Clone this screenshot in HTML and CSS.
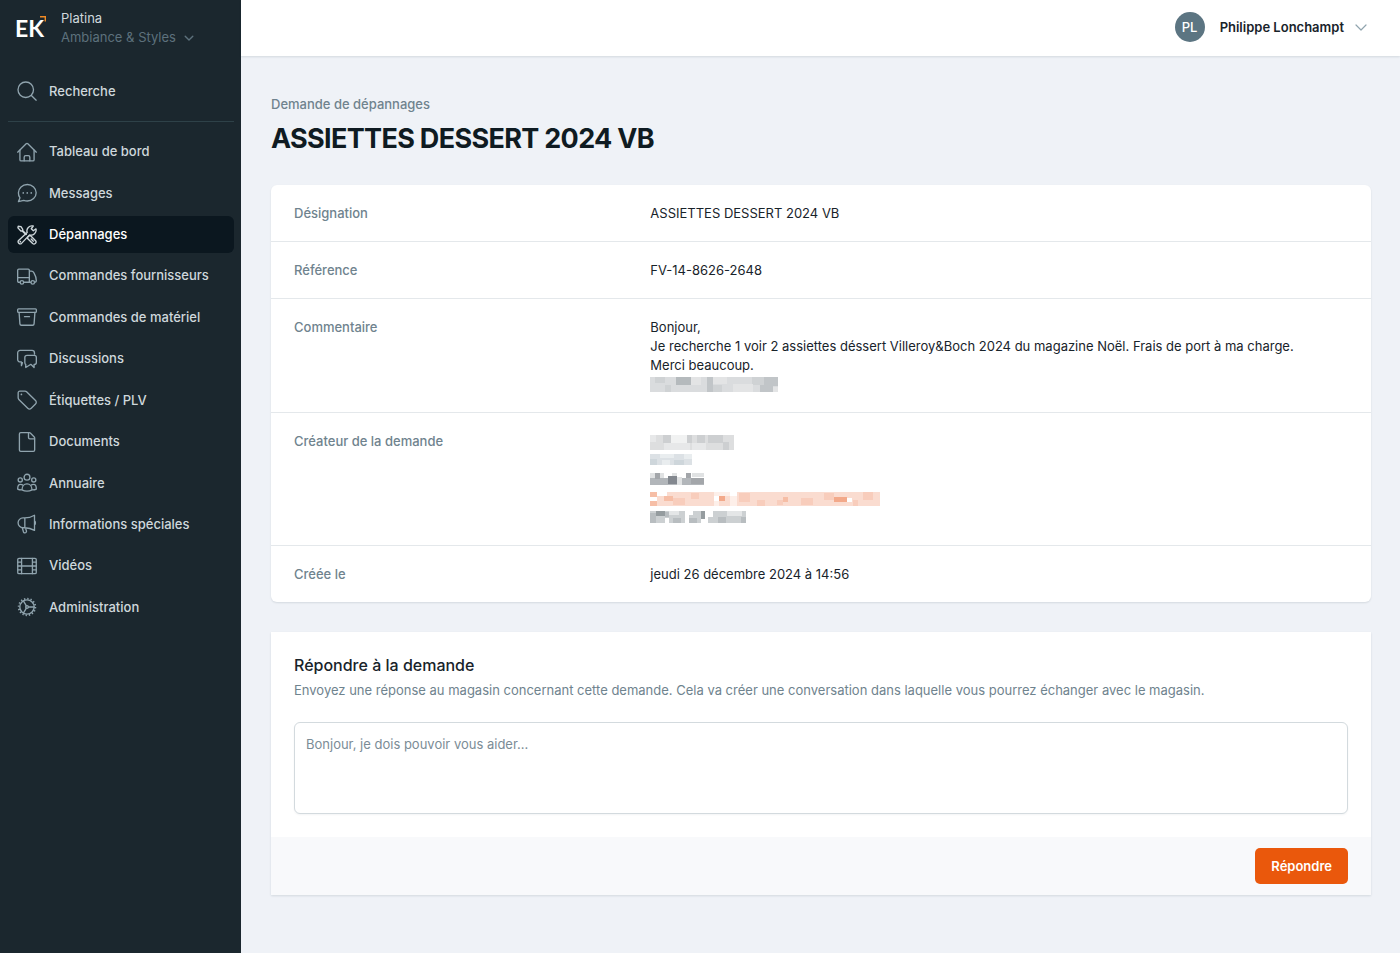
FILE: index.html
```html
<!DOCTYPE html>
<html lang="fr">
<head>
    <meta charset="UTF-8">
    <meta name="viewport" content="width=device-width, initial-scale=1.0">
    <title>ASSIETTES DESSERT 2024 VB</title>
    <link rel="stylesheet" href="styles.css">
</head>
<body>
    <aside class="sidebar">
        <button type="button" class="store-switch">
            <span class="logo">EK
                <svg class="logo-arrow" viewBox="0 0 6 6"><path d="M0 .7h5.3V5.5"/></svg>
            </span>
            <span class="store">
                <span class="store-name">Platina</span>
                <span class="store-brand">Ambiance &amp; Styles
                    <svg class="chevron" viewBox="0 0 10 10"><path d="M1.2 3.2 5 7l3.800-3.800"/></svg>
                </span>
            </span>
        </button>

        <a href="#" class="nav-link search-link">
            <svg class="icon" viewBox="0 0 24 24"><circle cx="10.500" cy="10.500" r="9.300"/><path d="m17.300 17.300 5.700 5.700"/></svg>
            Recherche
        </a>

        <nav class="nav">
            <a href="#" class="nav-link">
                <svg class="icon" viewBox="0 0 24 24"><path d="M.8 12.200 11 2.100a1.400 1.400 0 0 1 2 0l10.200 10.100"/><path d="M3.500 9.700v11.500c0 .8.600 1.400 1.400 1.400h14.200c.8 0 1.400-.6 1.400-1.400V9.700"/><path d="M8.600 22.500v-4.200c0-1.100.8-1.900 1.900-1.900h3c1.100 0 1.900.8 1.900 1.900v4.200"/></svg>
                Tableau de bord
            </a>
            <a href="#" class="nav-link">
                <svg class="icon" viewBox="0 0 24 24"><path d="M12.400 1.800c5.900 0 10.600 4.400 10.600 9.900s-4.700 9.900-10.600 9.900c-1.500 0-3-.3-4.300-.8L1.700 22.400l1.900-4.600a9.600 9.600 0 0 1-1.900-6.100c0-5.500 4.800-9.900 10.700-9.900Z"/><path class="dots" d="M7.500 11.900h.01M12.300 11.900h.01M17.100 11.900h.01"/></svg>
                Messages
            </a>
            <a href="#" class="nav-link active">
                <svg class="icon" viewBox="0 0 24 24"><path d="M1.500 1.500 4.800 2l2.100 3.300-.2 1.300 4.500 4.500M1.500 1.500l-.4 2 3.500 3.700 1.600-.1 4.400 4.400"/><path d="m14.500 13 1.600-.3 6.200 6.100a2.500 2.500 0 0 1-3.500 3.500l-6.100-6.200.3-1.600ZM17 16.800l2.600 2.600"/><path d="M22.800 4.600 19.600 7l-2.500-2.500L19.500 1.200a6.100 6.100 0 0 0-7.300 7.800L1.900 18.600a2.500 2.500 0 0 0 3.500 3.500L15.100 11.800a6.100 6.100 0 0 0 7.700-7.200Z"/><path class="dots" d="M4 20h.01"/></svg>
                Dépannages
            </a>
            <a href="#" class="nav-link">
                <svg class="icon" viewBox="0 0 24 24"><path d="M3.300 19.500H2.200c-.8 0-1.400-.6-1.400-1.400V5.200c0-.8.600-1.400 1.400-1.400h11.200c.8 0 1.400.6 1.400 1.400v14.300H8.600M.8 14h14M14.800 6.200h2.400c1.300 0 2.400.7 3 1.800 1.900 3.300 3 6.500 3 9.800 0 1-.7 1.700-1.700 1.700M16.300 19.500h-1.500"/><circle cx="5.900" cy="19.700" r="2.100"/><circle cx="18.900" cy="19.700" r="2.100"/></svg>
                Commandes fournisseurs
            </a>
            <a href="#" class="nav-link">
                <svg class="icon" viewBox="0 0 24 24"><rect x=".8" y="2.200" width="22.400" height="4.300" rx="1"/><path d="m2.500 6.500 1 13.800c.1 1 .8 1.600 1.700 1.600h13.600c.9 0 1.600-.6 1.700-1.600l1-13.800M9 11.600h6"/></svg>
                Commandes de matériel
            </a>
            <a href="#" class="nav-link">
                <svg class="icon" viewBox="0 0 24 24"><path d="M6.500 16.500 5.300 20v-4.500H3.800a3 3 0 0 1-3-3V4.700a3 3 0 0 1 3-3H18c1.700 0 3 1.300 3 3v1.500"/><path d="M12.200 7.700h8.500c1.400 0 2.500 1.100 2.500 2.500v5.900c0 1.400-1.100 2.500-2.500 2.500h-.2v3.600l-3.600-3.600h-.7l-5.700 3.600v-3.800c-.9-.3-1.100-1.100-1.100-2.300v-5.900c0-1.400 1.400-2.500 2.800-2.500Z"/></svg>
                Discussions
            </a>
            <a href="#" class="nav-link">
                <svg class="icon" viewBox="0 0 24 24"><path d="M3.300 1.400h6.300c.7 0 1.400.3 1.900.8l10.700 10.400a3 3 0 0 1 0 4.300l-5.100 5a3 3 0 0 1-4.200 0L2.200 11.300c-.5-.5-.8-1.200-.8-1.900V3.300c0-1 .9-1.900 1.900-1.900Z"/><path class="dots" d="M5.300 5.300h.01"/></svg>
                Étiquettes / PLV
            </a>
            <a href="#" class="nav-link">
                <svg class="icon" viewBox="0 0 24 24"><path d="M4.500.8h10.300c.5 0 .9.200 1.200.5l4.700 4.700c.3.300.5.800.5 1.200v14.400c0 .9-.7 1.600-1.600 1.600H4.500c-.9 0-1.600-.7-1.600-1.600V2.400C2.900 1.500 3.600.8 4.500.8Z"/><path d="M13.800 1v5.700c0 .9.700 1.600 1.600 1.600H21"/></svg>
                Documents
            </a>
            <a href="#" class="nav-link">
                <svg class="icon" viewBox="0 0 24 24"><circle cx="12" cy="5" r="3.500"/><circle cx="3.900" cy="8.300" r="2.500"/><circle cx="20.100" cy="8.300" r="2.500"/><path d="M6 20.200c0-4 2.500-7.200 6-7.200s6 3.200 6 7.200c-1.700 1-3.800 1.600-6 1.600s-4.300-.6-6-1.600ZM7.300 14.800c-.9-.8-2-1.200-3.200-1.200C2 13.600.8 15.800.8 19.300c1.400.7 3 1 5.200.9M16.700 14.800c.9-.8 2-1.200 3.200-1.200 2.100 0 3.300 2.200 3.300 5.700-1.400.7-3 1-5.200.9"/></svg>
                Annuaire
            </a>
            <a href="#" class="nav-link">
                <svg class="icon" viewBox="0 0 24 24"><path d="M9.400 16.500H7.200a5.900 5.900 0 0 1 0-11.800h2.200c4.100 0 8-1 11.600-3.200v18.200c-3.600-2.200-7.500-3.200-11.600-3.200Zm0 0V4.700M21 8.200c1.500 1 1.500 4 0 5M6.300 16.500l1.500 5.100c.3.900 1.300 1.300 2.200.9l.5-.2c.8-.4 1.100-1.300.8-2.100l-1.300-3.600"/></svg>
                Informations spéciales
            </a>
            <a href="#" class="nav-link">
                <svg class="icon" viewBox="0 0 24 24"><rect x=".9" y="2.800" width="22.200" height="18.400" rx="1.500"/><path d="M5.500 2.800v18.400M18.500 2.800v18.400M5.500 12h13M.9 7.400h4.600M.9 12h4.600M.9 16.600h4.600M18.500 7.400h4.600M18.500 12h4.600M18.500 16.600h4.600"/></svg>
                Vidéos
            </a>
            <a href="#" class="nav-link">
                <svg class="icon" viewBox="0 0 24 24"><circle cx="12" cy="12" r="8.600"/><circle class="teeth" cx="12" cy="12" r="10"/><circle cx="12" cy="12" r="1.600"/><path d="M13.600 12h7M11.200 10.600 7.700 4.600M11.200 13.400l-3.500 6"/></svg>
                Administration
            </a>
        </nav>
    </aside>

    <div class="page">
        <header class="topbar">
            <button type="button" class="user-menu">
                <span class="avatar">PL</span>
                <span class="user-name">Philippe Lonchampt</span>
                <svg class="user-chevron" viewBox="0 0 20 20"><path d="m5 8 5 5 5-5"/></svg>
            </button>
        </header>

        <main class="content">
            <p class="eyebrow">Demande de dépannages</p>
            <h1>ASSIETTES DESSERT 2024 VB</h1>

            <dl class="card details">
                <div class="row">
                    <dt>Désignation</dt>
                    <dd>ASSIETTES DESSERT 2024 VB</dd>
                </div>
                <div class="row">
                    <dt>Référence</dt>
                    <dd>FV-14-8626-2648</dd>
                </div>
                <div class="row">
                    <dt>Commentaire</dt>
                    <dd>
                        Bonjour,<br>
                        Je recherche 1 voir 2 assiettes déssert Villeroy&amp;Boch 2024 du magazine Noël. Frais de port à ma charge.<br>
                        Merci beaucoup.
                        <svg class="mosaic" width="128" height="19" shape-rendering="crispEdges">
                            <path fill="#dadcde" d="M0 2h128v15H0z"/>
                            <path fill="#cfd2d4" d="M5 2h10v6H5zM15 10h6v7h-6zM62 10h10v7H62zM102 2h12v8h-12z"/>
                            <path fill="#b5babd" d="M26 2h15v8H26z"/>
                            <path fill="#c1c5c8" d="M57 2h6v15h-6zM110 10h13v7h-13zM114 2h14v9h-14z"/>
                            <path fill="#e3e4e5" d="M63 2h14v7H63zM83 9h20v8H83zM41 2h10v8H41zM123 12h5v5h-5z"/>
                        </svg>
                    </dd>
                </div>
                <div class="row">
                    <dt>Créateur de la demande</dt>
                    <dd>
                        <svg class="mosaic" width="84" height="19" shape-rendering="crispEdges">
                            <path fill="#dddedf" d="M0 3h84v15H0z"/>
                            <path fill="#cdcfd1" d="M13 3h8v8h-8zM37 3h5v8h-5zM47 3h8v8h-8zM58 3h15v8H58zM73 10h6v8h-6z"/>
                            <path fill="#f1f2f2" d="M21 3h16v8H21z"/>
                            <path fill="#e7e8e9" d="M14 11h26v7H14zM42 11h14v7H42zM0 3h6v7H0z"/>
                        </svg>
                        <svg class="mosaic" width="42" height="19" shape-rendering="crispEdges">
                            <path fill="#dce1e5" d="M0 3h42v11H0z"/>
                            <path fill="#e9edef" d="M10 3h14v4H10zM12 9h8v5h-8zM34 3h8v5h-8z"/>
                            <path fill="#ced6db" d="M0 8h7v6H0zM24 9h10v5H24z"/>
                        </svg>
                        <svg class="mosaic" width="54" height="19" shape-rendering="crispEdges">
                            <path fill="#b2b6ba" d="M0 8h54v7H0z"/>
                            <path fill="#e0e2e3" d="M0 3h14v5H0zM22 3h5v3h-5zM42 3h12v4H42zM27 7h5v8h-5z"/>
                            <path fill="#a3a6aa" d="M5 3h5v6H5zM36 3h5v5h-5zM41 8h13v6H41z"/>
                            <path fill="#83888f" d="M18 6h9v8h-9z"/>
                        </svg>
                        <svg class="mosaic" width="230" height="19" shape-rendering="crispEdges">
                            <path fill="#fadcd0" d="M7 3h57v14H7zM69 7h11v10H69zM87 3h143v14H87zM0 3h7v14H0z"/>
                            <path fill="#fdefe9" d="M64 3h16v4H64zM64 12h5v5h-5zM80 7h7v10h-7z"/>
                            <path fill="#f6bea6" d="M0 3h7v5H0zM0 12h7v5H0zM14 7h9v5h-9zM133 8h5v5h-5z"/>
                            <path fill="#f8cdbc" d="M23 9h12v7H23zM41 4h8v6h-8zM89 4h11v9H89zM107 11h8v6h-8zM127 11h6v5h-6zM151 9h12v7h-12zM174 4h10v7h-10zM213 3h10v8h-10zM203 11h5v6h-5z"/>
                            <path fill="#f3a98a" d="M69 7h6v5h-6zM184 8h13v5h-13z"/>
                            <path fill="#fff" d="M7 3h10v4H7zM0 8h7v4H0zM197 9h5v4h-5z"/>
                        </svg>
                        <svg class="mosaic" width="96" height="19" shape-rendering="crispEdges">
                            <path fill="#ccd0d2" d="M0 3h35v12H0zM39 7h12v8H39zM43 3h12v8H43zM58 9h20v6H58zM63 3h33v7H63zM78 9h18v6H78z"/>
                            <path fill="#959c9f" d="M6 3h9v5H6zM51 3h4v8h-4z"/>
                            <path fill="#b8bdc0" d="M0 5h6v10H0zM15 4h4v5h-4zM23 10h8v5h-8zM39 10h8v5h-8zM68 9h8v6h-8zM91 9h5v6h-5z"/>
                            <path fill="#e4e6e7" d="M19 3h10v4H19zM77 3h15v5H77z"/>
                            <path fill="#fff" d="M15 10h4v5h-4z"/>
                        </svg>
                    </dd>
                </div>
                <div class="row">
                    <dt>Créée le</dt>
                    <dd>jeudi 26 décembre 2024 à 14:56</dd>
                </div>
            </dl>

            <form class="card reply">
                <div class="reply-body">
                    <h2><label for="reply-message">Répondre à la demande</label></h2>
                    <p class="reply-help">Envoyez une réponse au magasin concernant cette demande. Cela va créer une conversation dans laquelle vous pourrez échanger avec le magasin.</p>
                    <textarea id="reply-message" placeholder="Bonjour, je dois pouvoir vous aider..."></textarea>
                </div>
                <div class="reply-footer">
                    <button type="submit" class="btn">Répondre</button>
                </div>
            </form>
        </main>
    </div>
</body>
</html>
```
FILE: styles.css
```css
:root {
    --sidebar: #1b272e;
    --sidebar-active: #0b171f;
    --sidebar-text: #cfd8dc;
    --sidebar-icon: #90a4ae;
    --page: #eff2f7;
    --text: #18232a;
    --muted: #6f838e;
    --border: #e4e8eb;
    --accent: #ea580c;
}

* {
    box-sizing: border-box;
}

body {
    margin: 0;
    min-height: 100vh;
    display: flex;
    background: var(--page);
    color: var(--text);
    font-family: Inter, 'Liberation Sans', sans-serif;
    font-size: 13px;
    line-height: 19px;
}

h1, h2, p, dl, dd {
    margin: 0;
}

a {
    text-decoration: none;
}

button {
    border: 0;
    padding: 0;
    background: none;
    font: inherit;
    color: inherit;
    cursor: pointer;
}

svg {
    fill: none;
    stroke: currentColor;
    stroke-linecap: round;
    stroke-linejoin: round;
}

/* Sidebar */
.sidebar {
    flex: 0 0 241px;
    padding: 9px 7px 8px 8px;
    background: var(--sidebar);
    color: var(--sidebar-text);
}

.store-switch {
    display: flex;
    align-items: center;
    gap: 16px;
    padding-left: 7px;
    text-align: left;
}

.logo {
    position: relative;
    width: 30px;
    color: #fff;
    font: 700 23px/38px Lato, sans-serif;
}

.logo-arrow {
    position: absolute;
    top: 7px;
    right: -1px;
    width: 6px;
    height: 6px;
    stroke: #f08a24;
    stroke-width: 1.4;
    stroke-linecap: butt;
    stroke-linejoin: miter;
}

.store-name,
.store-brand {
    display: block;
}

.store-brand {
    color: #5d717c;
}

.chevron {
    width: 10px;
    height: 10px;
    margin-left: 4px;
    vertical-align: -1px;
    stroke-width: 1.4;
}

.nav {
    display: grid;
    grid-auto-rows: 1fr;
    gap: 4px;
    min-height: 493px;
    margin-top: 11px;
}

.nav-link {
    display: flex;
    align-items: center;
    gap: 12px;
    padding: 8px 9px;
    border-radius: 6px;
    color: var(--sidebar-text);
    font-weight: 500;
}

.nav-link.active {
    background: var(--sidebar-active);
    color: #fff;
}

.search-link {
    margin-top: 26px;
    padding-bottom: 20px;
    border-bottom: 1px solid #2e4148;
    border-radius: 0;
}

.icon {
    width: 20px;
    height: 20px;
    color: var(--sidebar-icon);
    stroke-width: 1.6;
}

.active .icon {
    color: #cfd8dc;
}

.dots {
    stroke-width: 2;
}

.teeth {
    stroke-width: 2.2;
    stroke-linecap: butt;
    stroke-dasharray: 1.6 2.327;
}

/* Top bar */
.page {
    flex: 1;
    min-width: 0;
}

.topbar {
    display: flex;
    justify-content: flex-end;
    padding: 12px 29px 14px;
    background: #fff;
    box-shadow: 0 1px 2px rgba(20, 40, 60, 0.12);
}

.user-menu {
    display: flex;
    align-items: center;
    font-weight: 600;
}

.avatar {
    width: 30px;
    height: 30px;
    margin-right: 15px;
    border-radius: 50%;
    background: #5c7582;
    color: #fff;
    font-weight: 500;
    line-height: 30px;
    text-align: center;
}

.user-chevron {
    width: 20px;
    height: 20px;
    margin-left: 7px;
    color: #90a4ae;
    stroke-width: 1.2;
}

/* Content */
.content {
    padding: 39px 29px 39px 30px;
}

.eyebrow {
    color: var(--muted);
    font-weight: 500;
}

h1 {
    margin: 8px 0 29px;
    font-size: 27px;
    font-weight: 700;
    line-height: 34px;
    letter-spacing: -0.025em;
    color: #0f1b22;
}

.card {
    background: #fff;
    box-shadow: 0 1px 2px rgba(20, 40, 60, 0.12);
}

.details {
    border-radius: 6px;
}

.row {
    display: grid;
    grid-template-columns: repeat(3, 1fr);
    gap: 15px;
    padding: 19px 23px 18px;
    border-bottom: 1px solid var(--border);
}

.row:last-child {
    border-bottom: 0;
}

dt {
    color: var(--muted);
    font-weight: 500;
}

dd {
    grid-column: span 2;
}

.mosaic {
    display: block;
    stroke: none;
}

/* Reply form */
.reply {
    margin-top: 30px;
}

.reply-body {
    padding: 22px 23px 23px;
}

h2 {
    margin-bottom: 4px;
    font-size: 16px;
    font-weight: 500;
    line-height: 23px;
}

.reply-help {
    color: var(--muted);
}

textarea {
    display: block;
    width: 100%;
    height: 92px;
    margin-top: 22px;
    padding: 12px 11px;
    border: 1px solid #d3dade;
    border-radius: 6px;
    background: #fff;
    color: inherit;
    font: inherit;
    resize: none;
    box-shadow: 0 1px 2px rgba(20, 40, 60, 0.05);
}

textarea::placeholder {
    color: #7b8c96;
}

.reply-footer {
    display: flex;
    justify-content: flex-end;
    padding: 11px 23px;
    background: #f8f9fb;
}

.btn {
    height: 36px;
    padding: 0 16px;
    border-radius: 5px;
    background: var(--accent);
    color: #fff;
    font-weight: 600;
}
```
